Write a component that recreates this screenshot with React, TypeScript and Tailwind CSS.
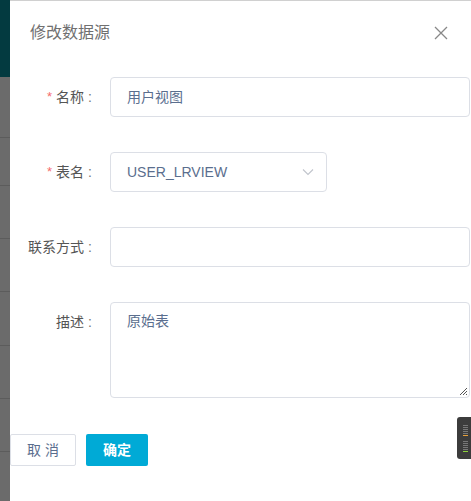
import React from "react";

const font = { fontFamily: '"Liberation Sans", "Noto Sans CJK SC", sans-serif' };

function Label({ text, required }: { text: string; required?: boolean }) {
  return (
    <div className="w-[82px] shrink-0 h-[40px] flex items-center justify-end text-[14px] text-[#555]">
      {required && <span className="text-[#f56c6c] mr-[4px] text-[13px]">*</span>}
      <span>{text}</span>
      <span className="ml-[4px] text-[#777]">:</span>
    </div>
  );
}

function StripRows() {
  const heights = [61, 48, 53, 53, 54, 53, 53];
  return (
    <div className="flex-1 bg-[#6b6b6b] flex flex-col">
      {heights.map((h, i) => (
        <div key={i} className="border-b border-[#5c5c5c]" style={{ height: h }} />
      ))}
    </div>
  );
}

export default function App() {
  return (
    <div className="w-[471px] h-[501px] flex overflow-hidden bg-white" style={font}>
      <div className="w-[10px] shrink-0 flex flex-col">
        <div className="h-[77px] bg-[#033a40]" />
        <StripRows />
      </div>
      <div className="flex-1 relative border-t border-[#d0d0d0] pr-[1px]">
        <div className="h-[64px] flex items-center justify-between pl-[20px] pr-[22px]">
          <span className="text-[16px] text-[#707070]">修改数据源</span>
          <svg width="14" height="14" viewBox="0 0 14 14" className="text-[#888]">
            <path d="M1 1L13 13M13 1L1 13" stroke="currentColor" strokeWidth="1.3" fill="none" />
          </svg>
        </div>

        <div className="mt-[12px] flex flex-col gap-[35px]">
          <div className="flex gap-[18px]">
            <Label text="名称" required />
            <div className="flex-1 h-[40px] border border-[#dcdfe6] rounded-[4px] flex items-center px-[16px] text-[14px] text-[#5a6e8e]">
              用户视图
            </div>
          </div>

          <div className="flex gap-[18px]">
            <Label text="表名" required />
            <div className="w-[217px] h-[40px] border border-[#dcdfe6] rounded-[4px] flex items-center justify-between pl-[16px] pr-[12px] text-[14px] text-[#5a6e8e]">
              <span>USER_LRVIEW</span>
              <svg width="12" height="8" viewBox="0 0 12 8" className="text-[#c0c4cc]">
                <path d="M1 1.5L6 6.5L11 1.5" stroke="currentColor" strokeWidth="1.1" fill="none" />
              </svg>
            </div>
          </div>

          <div className="flex gap-[18px]">
            <Label text="联系方式" />
            <div className="flex-1 h-[40px] border border-[#dcdfe6] rounded-[4px]" />
          </div>

          <div className="flex gap-[18px]">
            <Label text="描述" />
            <div className="flex-1 h-[96px] border border-[#dcdfe6] rounded-[4px] relative px-[16px] pt-[8px] text-[14px] text-[#5a6e8e]">
              原始表
              <svg width="10" height="10" viewBox="0 0 10 10" className="absolute right-[1px] bottom-[1px] text-[#555]">
                <path d="M9 2L2 9M9 5L5 9M9 8L8 9" stroke="currentColor" strokeWidth="1" fill="none" />
              </svg>
            </div>
          </div>
        </div>

        <div className="mt-[36px] flex gap-[10px]">
          <button className="w-[66px] h-[32px] border border-[#dcdfe6] rounded-[2px] bg-white text-[14px] text-[#5a6e8e] tracking-[4px] pl-[4px]">
            取消
          </button>
          <button className="w-[62px] h-[32px] rounded-[2px] bg-[#00aad6] text-[14px] text-white font-bold">
            确定
          </button>
        </div>

        <div className="absolute left-[447px] top-[416px] w-[16px] h-[42px] bg-[#3c3c3c] rounded-l-[3px] flex flex-col items-center justify-center gap-[1px]">
          {["#777", "#777", "#777", "#777", "#777", "#e8a13a", "", "#777", "#777", "#777", "#777", "#777", "#8bd13a"].map((c, i) =>
            c ? <div key={i} className="w-[5px] h-[1px]" style={{ background: c }} /> : <div key={i} className="h-[3px]" />
          )}
        </div>
      </div>
    </div>
  );
}
